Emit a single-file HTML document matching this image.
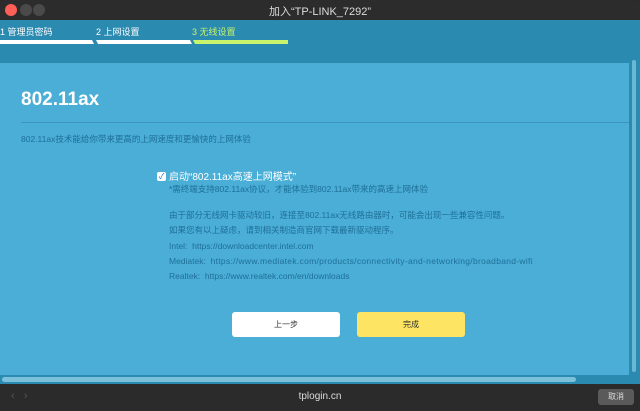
<!DOCTYPE html>
<html><head><meta charset="utf-8"><style>
*{margin:0;padding:0;box-sizing:border-box}
body{width:640px;height:411px;overflow:hidden;background:#2b2b2b;font-family:"Liberation Sans","Noto Sans CJK SC",sans-serif;position:relative}
.abs{position:absolute}
.tb{left:0;top:0;width:640px;height:20px;background:#2c2c2c;border-radius:8px 8px 0 0}
.dot{width:12px;height:12px;border-radius:50%;top:4px}
.hdr{left:0;top:20px;width:640px;height:43px;background:#2a8ab0}
.content{left:0;top:63px;width:629px;height:312px;background:#4aaed6}
.step{top:25px;font-size:9px;color:#fff}
.bar{top:40px;height:4px}
.small{font-size:8.5px;color:#1f6f98}
a{color:#1f6f98}
.btn{top:312px;width:108px;height:25px;border-radius:3px;font-size:8px;color:#333;text-align:center;line-height:25px}
</style></head><body>
<div class="abs tb"></div>
<div class="abs dot" style="left:5px;background:#fe5f57"></div>
<div class="abs dot" style="left:20px;background:#4a4a4a"></div>
<div class="abs dot" style="left:33px;background:#4a4a4a"></div>
<div class="abs" style="left:0;width:640px;top:3px;text-align:center;color:#ddd;font-size:11px;">加入“TP-LINK_7292”</div>
<div class="abs hdr"></div>
<div class="abs step" style="left:0">1 管理员密码</div>
<div class="abs step" style="left:96px">2 上网设置</div>
<div class="abs step" style="left:192px;color:#c8f36a">3 无线设置</div>
<div class="abs bar" style="left:0;width:94px;background:#fff;clip-path:polygon(0 0,92px 0,94px 100%,0 100%)"></div>
<div class="abs bar" style="left:96px;width:96px;background:#fff;clip-path:polygon(0 0,94px 0,96px 100%,2px 100%)"></div>
<div class="abs bar" style="left:193px;width:95px;background:#c8f36a;clip-path:polygon(0 0,95px 0,95px 100%,2px 100%)"></div>
<div class="abs content"></div>
<div class="abs" style="left:629px;top:58px;width:11px;height:318px;background:#2a8ab0"></div>
<div class="abs" style="left:632px;top:60px;width:4px;height:312px;background:#6ab8d6;border-radius:3px"></div>
<div class="abs" style="left:21px;top:89px;font-size:19px;color:#fff;font-weight:bold">802.11ax</div>
<div class="abs" style="left:21px;top:122px;width:608px;height:1px;background:#3e94be"></div>
<div class="abs small" style="left:21px;top:133px">802.11ax技术能给你带来更高的上网速度和更愉快的上网体验</div>
<div class="abs" style="left:157px;top:172px;width:9px;height:9px;background:#fff;border-radius:2px;color:#1a6fd8;font-size:8px;line-height:9px;text-align:center">✓</div>
<div class="abs" style="left:169px;top:168px;font-size:10px;color:#fff">启动“802.11ax高速上网模式”</div>
<div class="abs small" style="left:169px;top:183px">*需终端支持802.11ax协议，才能体验到802.11ax带来的高速上网体验</div>
<div class="abs small" style="left:169px;top:208px;line-height:15.3px">由于部分无线网卡驱动较旧，连接至802.11ax无线路由器时，可能会出现一些兼容性问题。<br>如果您有以上疑虑，请到相关制造商官网下载最新驱动程序。<br>Intel:&nbsp; <a>https://downloadcenter.intel.com</a><br>Mediatek:&nbsp; <a style="letter-spacing:0.3px">https://www.mediatek.com/products/connectivity-and-networking/broadband-wifi</a><br>Realtek:&nbsp; <a>https://www.realtek.com/en/downloads</a></div>
<div class="abs btn" style="left:232px;background:#fff">上一步</div>
<div class="abs btn" style="left:357px;background:#fde462">完成</div>
<div class="abs" style="left:0;top:375px;width:640px;height:9px;background:#2a8ab0"></div>
<div class="abs" style="left:2px;top:377px;width:574px;height:5px;background:#7cc0dc;border-radius:3px"></div>
<div class="abs" style="left:0;top:384px;width:640px;height:27px;background:#2b2b2b"></div>
<div class="abs" style="left:11px;top:390px;color:#555;font-size:11px">‹&nbsp;&nbsp;&nbsp;›</div>
<div class="abs" style="left:0;width:640px;top:391px;text-align:center;color:#ddd;font-size:10px">tplogin.cn</div>
<div class="abs" style="left:598px;top:389px;width:36px;height:16px;background:#5a5a5a;border-radius:3px;color:#ddd;font-size:8px;text-align:center;line-height:16px">取消</div>
</body></html>
